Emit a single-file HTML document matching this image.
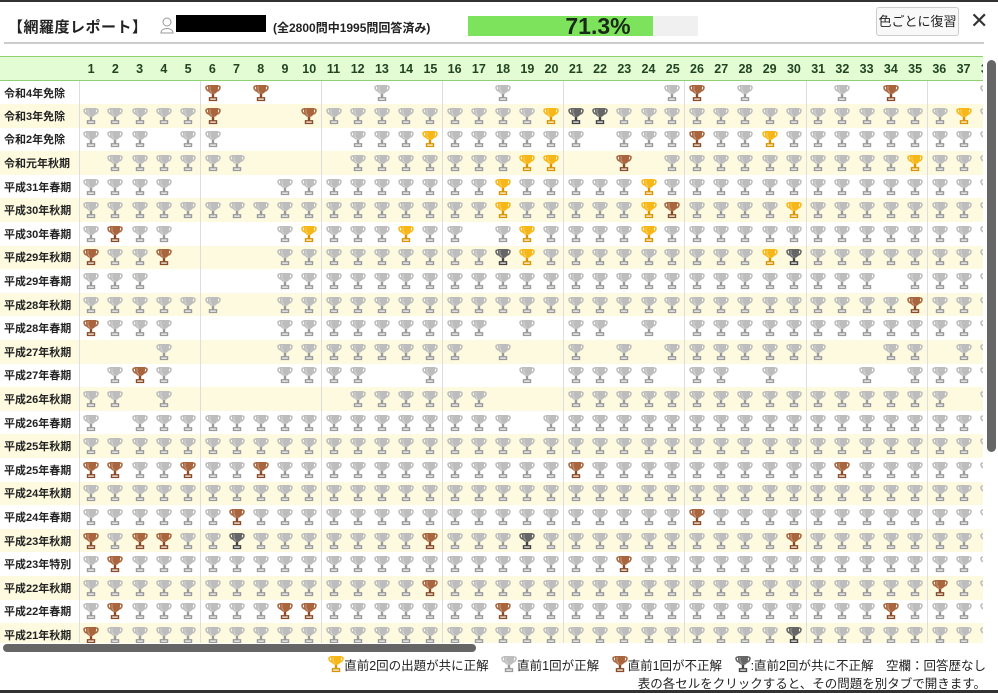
<!DOCTYPE html>
<html><head><meta charset="utf-8">
<style>
*{box-sizing:border-box;margin:0;padding:0}
html,body{width:998px;height:693px;overflow:hidden;background:#fff;font-family:"Liberation Sans","Noto Sans CJK JP",sans-serif;color:#222}
#topline{position:absolute;left:0;top:0;width:998px;height:2px;background:#333}
#botline{position:absolute;left:0;top:690px;width:998px;height:3px;background:#333}
#title{position:absolute;left:8px;top:16px;font-size:15px;font-weight:bold;letter-spacing:0.5px}
#person{position:absolute;left:160px;top:16px}
#blk{position:absolute;left:176px;top:15px;width:90px;height:17px;background:#000}
#cnt{position:absolute;left:273px;top:19px;font-size:12px;font-weight:bold}
#bar{position:absolute;left:468px;top:16px;width:230px;height:20px;background:#f0f0f0}
#bar .f{position:absolute;left:0;top:0;width:185px;height:20px;background:#7ee35c}
#bar .t{position:absolute;left:0;top:-3px;width:260px;text-align:center;font-size:23px;font-weight:bold;color:#1a2a1a}
#btn{position:absolute;left:876px;top:7px;width:83px;height:29px;border:1px solid #ccc;border-radius:3px;background:#f8f8f8;font-size:13px;text-align:center;line-height:27px}
#x{position:absolute;left:970px;top:8px;font-size:22px;color:#333}
#sep{position:absolute;left:4px;top:42px;width:980px;height:2px;background:#ccc}
#wrap{position:absolute;left:0;top:56px;width:983px;height:587px;overflow:hidden}
table{border-collapse:collapse;table-layout:fixed;width:1049px}
td{height:23.6px;padding:0;text-align:center;vertical-align:middle}
thead td{height:24px;background:#e3fcd4;border-top:1px solid #8fd070;border-bottom:1px solid #8fd070;font-size:12.5px;font-weight:bold;color:#224422}
td.l{width:79px;font-size:11px;font-weight:bold;text-align:left;padding-left:4px;border-right:1px solid #ddd;white-space:nowrap}
tr.y td{background:#fdfae0}
td.v{border-right:1px solid #ddd}
td svg{display:block;margin:0 auto}
#vs{position:absolute;left:987px;top:60px;width:9px;height:392px;background:#666;border-radius:5px}
#hs{position:absolute;left:3px;top:644px;width:473px;height:8px;background:#666;border-radius:4px}
#leg{position:absolute;right:12px;top:655px;font-size:12.5px;text-align:right;line-height:18px}
#leg svg{vertical-align:-3px}
</style></head><body>
<div id="topline"></div>
<div id="title">【網羅度レポート】</div>
<svg id="person" width="14" height="18" viewBox="0 0 14 18"><circle cx="7" cy="6" r="4" fill="none" stroke="#999" stroke-width="1"/><path d="M1 17 C1 11 13 11 13 17 Z" fill="none" stroke="#999" stroke-width="1"/></svg>
<div id="blk"></div>
<div id="cnt">(全2800問中1995問回答済み)</div>
<div id="bar"><div class="f"></div><div class="t">71.3%</div></div>
<div id="btn">色ごとに復習</div>
<div id="x">✕</div>
<div id="sep"></div>
<div id="wrap"><table id="tb"></table></div>
<div id="vs"></div>
<div id="hs"></div>
<div id="leg"><span id="lg"></span><br>表の各セルをクリックすると、その問題を別タブで開きます。</div>
<div id="botline"></div>
<script>
var C={s:['#bdbdbd','#9a9a9a'],g:['#f7b718','#d99400'],b:['#a8653e','#8a4c28'],d:['#666','#444']};
function tr(k){var c=C[k];return '<svg width="16" height="18" viewBox="0 0 16 18"><path d="M3 2 Q0.5 2 1.2 4.5 Q2 7 4.5 7" fill="none" stroke="'+c[0]+'" stroke-width="1.6"/><path d="M13 2 Q15.5 2 14.8 4.5 Q14 7 11.5 7" fill="none" stroke="'+c[0]+'" stroke-width="1.6"/><path d="M3 1 H13 V4 C13 8 11 10 8 10 C5 10 3 8 3 4 Z" fill="'+c[0]+'"/><path d="M5 2 V5 C5 7 6 8 7 8.5" fill="none" stroke="#fff" stroke-opacity="0.35" stroke-width="1"/><rect x="6.8" y="10" width="2.4" height="3.5" fill="'+c[1]+'"/><rect x="4.5" y="13.8" width="7" height="2.6" fill="#fff" stroke="'+c[1]+'" stroke-width="1.4"/></svg>';}
var labels=["令和4年免除","令和3年免除","令和2年免除","令和元年秋期","平成31年春期","平成30年秋期","平成30年春期","平成29年秋期","平成29年春期","平成28年秋期","平成28年春期","平成27年秋期","平成27年春期","平成26年秋期","平成26年春期","平成25年秋期","平成25年春期","平成24年秋期","平成24年春期","平成23年秋期","平成23年特別","平成22年秋期","平成22年春期","平成21年秋期"];
var rows=[
".....b.b....s....s......sb.s...s.b...",
"sssssb...bsssssssssgddssssssssssssssg",
"sss.ss.....sssgssssss.sssbssgssssssss",
".ssssss....sssssssgg..b.ssssssssssgss",
"ssss....sssssssssgsssssgssssssssssss",
"sssssssssssssssssgsssssgbssssgsssssss",
"sbss....sgsssgss.sgssssgsssssssssssss",
"bssb....sssssssssdgsssssssssgdssssss",
"sss.....sssssssssssssssssssssssss.sss",
"ssssss..ssssssssssssssssssssssssssbss",
"bsss....sssssssss.s.ss.s.ssssssssssss",
"...s....ssssssss.s..s.s.sssssss..ss.s",
".sbs....ssss..s...s.ssss.ss.s...s.ss",
"ss.s.......ssssss...ssssssssssssssss.",
"s.ssssssssssssssss.sssssssssssssssss",
"sssssssssssssssssssssssssssssssssssss",
"bbssbssbssssssssssssbssssssssssbsssss",
"sssssssssssssssssssssssssssssssssssss",
"ssssssbssssssssssssssssssbsssssssssss",
"bsbbssdsssssssbsssdssssssssssbsssssss",
"sbssssssssssssssssssssbssssssssssssss",
"ssssssssssssssbssssssssssssssssssssbs",
"sbssssssbbsssssssbsssssssssssssssbsss",
"bssssssssssssssssssssssssssssdsssssss"];
var N=40;
var h='<thead><tr><td class="l" style="border-right:none"></td>';
for(var i=1;i<=N;i++)h+='<td>'+i+'</td>';
h+='</tr></thead><tbody>';
for(var r=0;r<24;r++){h+='<tr'+(r%2?' class="y"':'')+'><td class="l">'+labels[r]+'</td>';var s=(rows[r]+'ssssssssssssss').slice(0,N);
for(var i=1;i<=N;i++){var k=s[i-1];h+='<td'+(i%5==0?' class="v"':'')+'>'+(k=='.'?'':tr(k))+'</td>';}h+='</tr>';}
h+='</tbody>';document.getElementById('tb').innerHTML=h;
document.getElementById('lg').innerHTML=tr('g')+'直前2回の出題が共に正解　'+tr('s')+'直前1回が正解　'+tr('b')+'直前1回が不正解　'+tr('d')+':直前2回が共に不正解　空欄：回答歴なし';
</script>
</body></html>
